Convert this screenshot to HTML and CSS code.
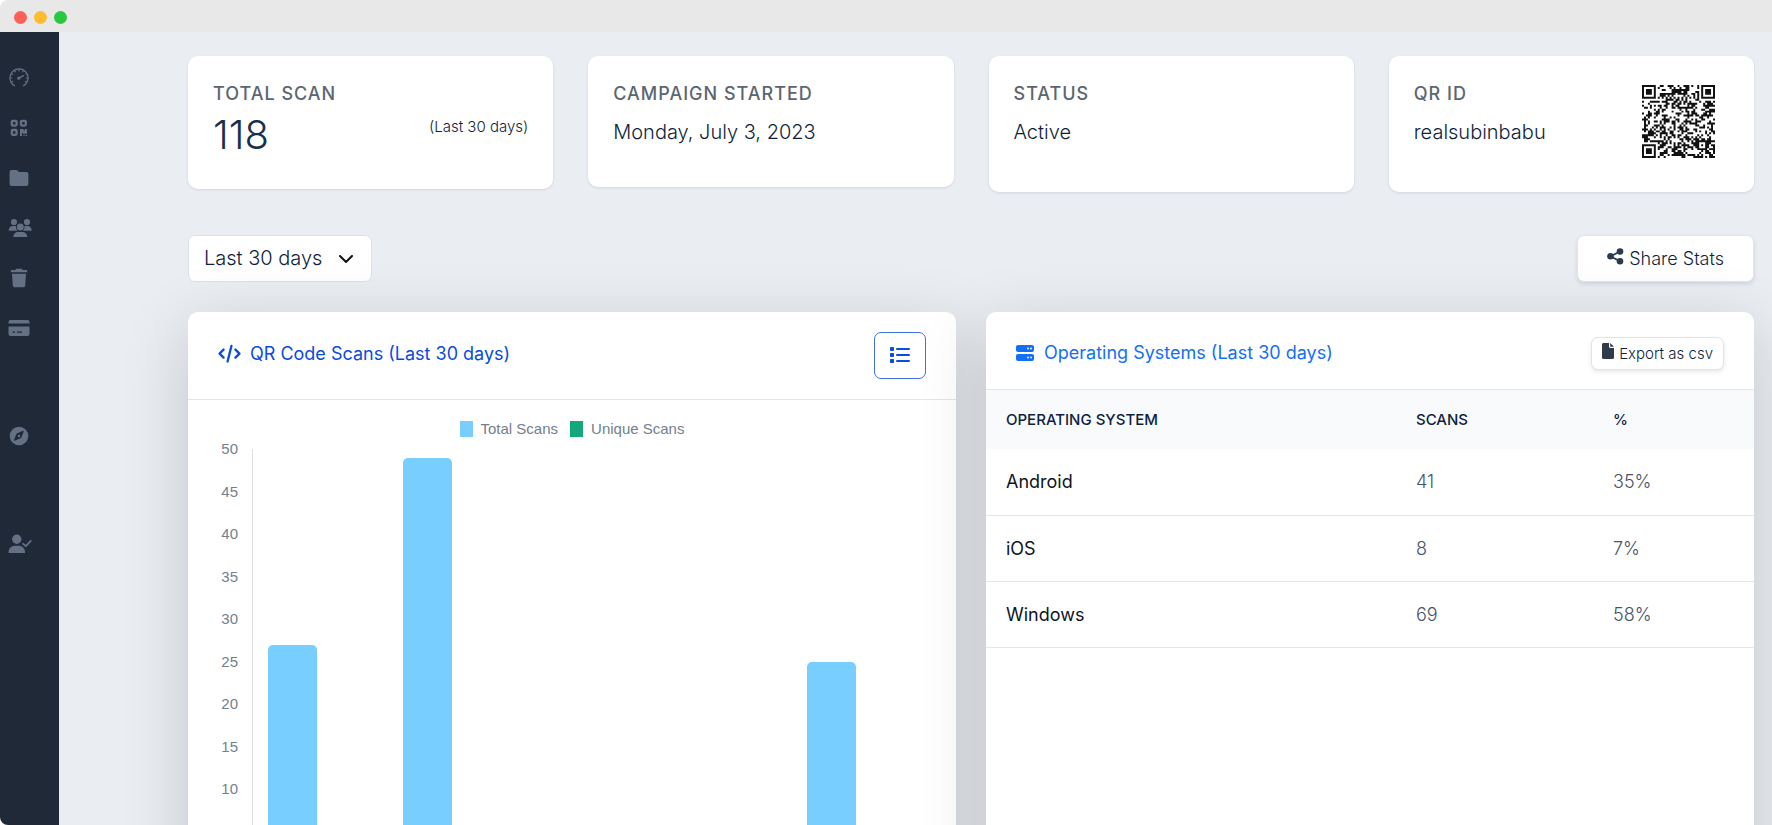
FILE: index.html
```
<!DOCTYPE html>
<html lang="en">
<head>
  <meta charset="utf-8">
  <title>QR Stats</title>
  <link rel="stylesheet" href="styles.css">
</head>
<body>
<div class="window">
  <!-- title bar -->
  <div class="title-bar">
    <span class="dot red"></span>
    <span class="dot yellow"></span>
    <span class="dot green"></span>
  </div>

  <div class="app">
    <!-- sidebar -->
    <nav class="sidebar">
      <a href="#" aria-label="Dashboard">
        <svg width="20" height="20" viewBox="0 0 20 20" fill="none" stroke="currentColor" stroke-width="1.2" stroke-linecap="round">
          <path d="M5.6 17.8A9 9 0 1 1 14.4 17.8"/>
          <path d="M10 1.4v1.6M5.6 2.6l.7 1.2M14.4 2.6l-.7 1.2M2.4 5.8l1.3.7M1.3 10h1.5M2.4 14.2l1.3-.7M17.6 14.2l-1.3-.7M18.7 10h-1.5M17.6 5.8l-.6.4"/>
          <path d="M10.4 9.8l4-2.1" stroke-width="1.5"/>
          <circle cx="9.8" cy="10.2" r="1" fill="currentColor"/>
        </svg>
      </a>
      <a href="#" aria-label="QR codes">
        <svg width="20" height="20" viewBox="0 0 20 20" fill="none" stroke="currentColor" stroke-width="2.3">
          <rect x="2.8" y="2.8" width="4.8" height="4.8" rx="1"/>
          <rect x="12" y="2.8" width="4.8" height="4.8" rx="1"/>
          <rect x="2.8" y="12" width="4.8" height="4.8" rx="1"/>
          <path fill="currentColor" stroke="none" d="M11 11h3l1.800 2V11H18v4.800h-3.600L13 14.500V18h-2zM14.400 16.700h1.300V18h-1.300zM16.700 16.700H18V18h-1.300z"/>
        </svg>
      </a>
      <a href="#" aria-label="Folders">
        <svg width="20" height="20" viewBox="0 0 20 20" fill="currentColor"><path d="M.6 4a2 2 0 0 1 2-2h4.5c.6 0 1.2.2 1.6.7l.8.8c.4.4.8.6 1.4.6h6.5a2 2 0 0 1 2 2V16a2 2 0 0 1-2 2H2.600a2 2 0 0 1-2-2z"/></svg>
      </a>
      <a href="#" aria-label="Team">
        <svg width="24" height="20" viewBox="0 0 24 20" fill="currentColor">
          <circle cx="6" cy="4" r="3.100"/><circle cx="19" cy="4" r="3.100"/><circle cx="12.300" cy="9" r="3.500"/>
          <path d="M.7 12.700C.7 10 2.500 8 5 8h2.200c.3 0 .6 0 .9.100-.3 2 .300 3.500 1.400 4.600zM23.700 12.700c0-2.700-1.800-4.700-4.300-4.700h-2.100c-.3 0-.6 0-.9.100.3 2-.300 3.500-1.400 4.600zM5.300 19c0-3 2.200-5 4.900-5h4.200c2.700 0 4.900 2 4.900 5z"/>
        </svg>
      </a>
      <a href="#" aria-label="Trash">
        <svg width="20" height="20" viewBox="0 0 20 20" fill="currentColor"><path d="M7.200.800h5.600l.8 1.200h3.600c.6 0 1 .4 1 1v1.200H1.800V3c0-.6.4-1 1-1h3.600zM3 5.700h14l-.8 12c-.1.900-.8 1.500-1.700 1.500H5.500c-.9 0-1.600-.6-1.700-1.500z"/></svg>
      </a>
      <a href="#" aria-label="Billing">
        <svg width="22" height="20" viewBox="0 0 22 20" fill="currentColor"><path fill-rule="evenodd" d="M2.500 2h17a2 2 0 0 1 2 2v1.600H.5V4a2 2 0 0 1 2-2zM.5 8.500h21V16a2 2 0 0 1-2 2h-17a2 2 0 0 1-2-2zM4.500 13.400v1.300H7v-1.300zM9 13.400v1.300h5v-1.300z"/></svg>
      </a>
      <a href="#" class="spaced" aria-label="Explore">
        <svg width="20" height="20" viewBox="0 0 20 20" fill="currentColor"><path fill-rule="evenodd" d="M10 .700a9.300 9.300 0 1 1 0 18.600A9.300 9.300 0 0 1 10 .700zM14.800 5.300c.1-.4-.2-.7-.6-.6L8.300 7.200c-.5.200-.8.500-1 1l-2.300 5.900c-.1.400.200.700.600.600l5.900-2.500c.5-.2.800-.5 1-1zM10 8.700a1.300 1.300 0 1 1 0 2.600 1.300 1.300 0 0 1 0-2.600z"/></svg>
      </a>
      <a href="#" class="spaced" aria-label="Account">
        <svg width="24" height="20" viewBox="0 0 24 20" fill="currentColor">
          <circle cx="8.800" cy="5.300" r="4.700"/>
          <path d="M.6 19v-1c0-3.600 2.900-6.300 6.500-6.300h3.400c3.600 0 6.500 2.700 6.500 6.300v1z"/>
          <path d="M15.200 9.800l2.600 2.400 5-5.400" fill="none" stroke="currentColor" stroke-width="1.800" stroke-linecap="round" stroke-linejoin="round"/>
        </svg>
      </a>
    </nav>

    <main class="content">
      <!-- summary cards -->
      <div class="cards">
        <div class="card card-total">
          <h2>Total Scan</h2>
          <div class="card-row">
            <span class="total">118</span>
            <span class="period">(Last 30 days)</span>
          </div>
        </div>
        <div class="card card-campaign">
          <h2>Campaign Started</h2>
          <p>Monday, July 3, 2023</p>
        </div>
        <div class="card">
          <h2>Status</h2>
          <p>Active</p>
        </div>
        <div class="card card-qr">
          <div>
            <h2>QR ID</h2>
            <p>realsubinbabu</p>
          </div>
          <svg id="qr" class="qr" viewBox="0 0 37 37" role="img" aria-label="QR code"></svg>
        </div>
      </div>

      <!-- toolbar -->
      <div class="toolbar">
        <select class="range" aria-label="Date range">
          <option>Last 30 days</option>
        </select>
        <button type="button" class="share">
          <svg width="17" height="17" viewBox="0 0 17 17" fill="currentColor"><circle cx="13" cy="3.500" r="3.300"/><circle cx="3.500" cy="8.300" r="3.300"/><circle cx="13" cy="13.200" r="3.300"/><path d="M13 3.500L3.500 8.300l9.500 4.900" fill="none" stroke="currentColor" stroke-width="1.800"/></svg>
          Share Stats
        </button>
      </div>

      <div class="panels">
        <!-- scans chart -->
        <section class="panel">
          <div class="panel-head head-scans">
            <h3>
              <svg width="23" height="20" viewBox="0 0 24 20" fill="none" stroke="currentColor" stroke-width="2.400" stroke-linecap="round" stroke-linejoin="round"><path d="M5.800 5.400L1.600 9.600l4.200 4.200M18.200 5.400l4.200 4.200-4.200 4.200M14 1.600L10 17.800"/></svg>
              QR Code Scans (Last 30 days)
            </h3>
            <button type="button" class="list-btn" aria-label="Show list">
              <svg width="20" height="18" viewBox="0 0 20 18" fill="currentColor"><rect x="0" y="0" width="4" height="4" rx=".8"/><rect x="0" y="6" width="4" height="4" rx=".8"/><rect x="0" y="12" width="4" height="4" rx=".8"/><rect x="6" y="1" width="14" height="2" rx="1"/><rect x="6" y="7" width="14" height="2" rx="1"/><rect x="6" y="13" width="14" height="2" rx="1"/></svg>
            </button>
          </div>
          <div class="chart">
            <div class="legend">
              <span><i class="swatch blue"></i>Total Scans</span>
              <span><i class="swatch teal"></i>Unique Scans</span>
            </div>
            <div class="chart-body">
              <div class="y-axis">
                <span>50</span><span>45</span><span>40</span><span>35</span><span>30</span><span>25</span><span>20</span><span>15</span><span>10</span>
              </div>
              <div class="plot">
                <div class="day"><div class="bar" style="height: 54%"></div></div>
                <div class="day"><div class="bar" style="height: 98%"></div></div>
                <div class="day"></div>
                <div class="day"></div>
                <div class="day"><div class="bar" style="height: 50%"></div></div>
              </div>
            </div>
          </div>
        </section>

        <!-- operating systems -->
        <section class="panel">
          <div class="panel-head head-os">
            <h3>
              <svg width="18" height="16" viewBox="0 0 18 16"><rect width="18" height="7" rx="2" fill="currentColor"/><rect y="9" width="18" height="7" rx="2" fill="currentColor"/><g fill="#fff"><circle cx="12" cy="3.500" r=".9"/><circle cx="15" cy="3.500" r=".9"/><circle cx="12" cy="12.500" r=".9"/><circle cx="15" cy="12.500" r=".9"/></g></svg>
              Operating Systems (Last 30 days)
            </h3>
            <button type="button" class="export">
              <svg width="12" height="16" viewBox="0 0 12 16" fill="currentColor"><path d="M1.500 0H7v3.500C7 4.400 7.600 5 8.500 5H12v9.500c0 .8-.7 1.500-1.500 1.500h-9C.7 16 0 15.300 0 14.500v-13C0 .7.700 0 1.500 0zM8.200 0L12 3.800H8.200z"/></svg>
              Export as csv
            </button>
          </div>
          <table class="os-table">
            <thead>
              <tr><th class="col-os">Operating System</th><th class="col-scans">Scans</th><th>%</th></tr>
            </thead>
            <tbody>
              <tr><td>Android</td><td>41</td><td>35%</td></tr>
              <tr><td>iOS</td><td>8</td><td>7%</td></tr>
              <tr><td>Windows</td><td>69</td><td>58%</td></tr>
            </tbody>
          </table>
        </section>
      </div>
    </main>
  </div>
</div>
<script src="qr.js"></script>
</body>
</html>
```
FILE: styles.css
```
* { box-sizing: border-box; }
body { margin: 0; background: #fff; color: #0f1f3d; font-family: Inter, "Liberation Sans", sans-serif; }
h2, h3, p { margin: 0; }
svg { flex-shrink: 0; }
button, select { font-family: inherit; cursor: pointer; }

/* window */
.window { display: flex; flex-direction: column; height: 100vh; overflow: hidden; border-radius: 8px 0 0 8px; }
.title-bar { display: flex; align-items: center; gap: 7px; height: 32px; flex-shrink: 0; padding: 2px 14px 0; background: #e8e8e8; }
.dot { width: 13px; height: 13px; border-radius: 50%; }
.red { background: #ff5f57; }
.yellow { background: #febc2e; }
.green { background: #28c840; }
.app { display: flex; flex: 1; min-height: 0; }

/* sidebar */
.sidebar { display: flex; flex-direction: column; flex-shrink: 0; width: 59px; padding-top: 21px; background: #1f2937; }
.sidebar a { display: flex; align-items: center; height: 50px; padding-left: 8px; color: #647084; }
.sidebar a svg[width="20"] { margin-left: 1px; }
.sidebar .spaced { margin-top: 58px; }

/* content */
.content { flex: 1; min-width: 0; padding: 24px 18px 0 129px; background: #eaedf2; }
.cards { display: grid; grid-template-columns: repeat(4, 1fr); gap: 35px; align-items: start; }
.card { min-height: 136px; padding: 25px; background: #fff; border-radius: 10px; box-shadow: 0 1px 3px rgba(15, 31, 61, .1); }
.card-total { min-height: 133px; padding-bottom: 0; }
.card-campaign { min-height: 131px; }
.card h2 { color: #5b6670; font-size: 18px; font-weight: 500; line-height: 26px; letter-spacing: 1px; text-transform: uppercase; }
.card p { margin-top: 10px; font-size: 20px; font-weight: 300; line-height: 30px; }
.card-row { display: flex; justify-content: space-between; align-items: flex-start; }
.total { margin-top: 4px; color: #17304d; font-size: 40px; font-weight: 300; line-height: 48px; }
.period { margin-top: 8px; font-size: 15px; line-height: 24px; font-weight: 300; }
.card-qr { display: flex; justify-content: space-between; align-items: flex-start; }
.qr { width: 73px; height: 73px; margin: 4px 14px 0 0; }

/* toolbar */
.toolbar { display: flex; justify-content: space-between; align-items: center; margin: 43px 0 30px; }
.range { appearance: none; width: 184px; height: 47px; padding: 0 15px 1px; border: 1px solid #dbe0e8; border-radius: 7px; color: #0f1f3d; font-size: 20px; font-weight: 300;
  background: #fff url("data:image/svg+xml,%3Csvg xmlns='http://www.w3.org/2000/svg' width='14' height='8' fill='none' stroke='%23111' stroke-width='2' stroke-linecap='round' stroke-linejoin='round'%3E%3Cpath d='M1 1l6 6 6-6'/%3E%3C/svg%3E") no-repeat right 18px center; }
.share { display: flex; align-items: center; gap: 5px; height: 47px; padding: 0 29px; background: #fff; border: 1px solid #e2e5ec; border-radius: 7px; box-shadow: 0 2px 4px rgba(15, 31, 61, .12); color: #0f1f3d; font-size: 18px; font-weight: 300; }
.share svg { color: #2c3a4d; margin-bottom: 4px; }

/* panels */
.panels { display: grid; grid-template-columns: 1fr 1fr; gap: 30px; }
.panel { min-height: 600px; background: #fff; border-radius: 10px; box-shadow: 0 16px 66px rgba(0, 0, 0, .17); }
.panel-head { display: flex; justify-content: space-between; align-items: center; padding: 0 30px; border-bottom: 1px solid #e2e5e9; }
.panel-head h3 { display: flex; align-items: center; gap: 9px; font-size: 18px; font-weight: 400; line-height: 24px; }
.head-scans { height: 88px; }
.head-scans h3 { color: #0a4be0; margin-bottom: 4px; }
.head-os { height: 78px; padding-top: 5px; }
.head-os h3 { color: #1370f5; gap: 10px; }
.list-btn { display: flex; align-items: center; justify-content: center; width: 52px; height: 47px; background: #fff; border: 1px solid #3f6fe0; border-radius: 7px; color: #0a4be0; }
.export { display: flex; align-items: center; gap: 5px; height: 33px; padding: 0 10px; background: #fff; border: 1px solid #dfe3ea; border-radius: 7px; box-shadow: 0 2px 4px rgba(15, 31, 61, .1); color: #0f1f3d; font-size: 15px; font-weight: 300; }
.export svg { color: #2f3b4c; margin-bottom: 4px; }

/* chart */
.chart { padding: 19px 29px 0 20px; color: #73808d; font: 15px/20px "Liberation Sans", Arial, sans-serif; }
.legend { display: flex; justify-content: center; gap: 12px; margin-left: 9px; }
.legend span { display: flex; align-items: center; gap: 8px; }
.swatch { width: 13px; height: 16px; }
.blue { background: #78ceff; }
.teal { background: #12a87b; }
.chart-body { display: flex; align-items: flex-start; }
.y-axis { display: flex; flex-direction: column; justify-content: space-between; width: 30px; height: 360px; text-align: right; }
.plot { display: grid; grid-template-columns: repeat(5, 1fr); flex: 1; height: 425px; margin: 10px 0 0 14px; border-left: 1px solid #dde0e3; }
.day { display: flex; align-items: flex-end; padding-left: 15px; }
.bar { width: 49px; background: #78ceff; border-radius: 5px 5px 0 0; }

/* table */
.os-table { width: 100%; table-layout: fixed; border-collapse: collapse; }
.os-table th, .os-table td { padding: 0 20px; text-align: left; }
.os-table th { height: 59px; background: #f8fafc; color: #0f1f3d; font-size: 15px; font-weight: 500; text-transform: uppercase; }
.os-table td { height: 66px; border-bottom: 1px solid #e2e5e9; color: #475268; font-size: 18px; font-weight: 300; }
.os-table td:first-child { color: #0d1524; font-weight: 400; }
.col-os { width: 410px; }
.col-scans { width: 197px; }
```
FILE: qr.js
```
// draws the QR code for the campaign card
var SIZE = 37;
var seed = 2023;

function nextBit() {
  seed = (seed * 1103515245 + 12345) % 2147483648;
  return (seed >> 16) & 1;
}

// concentric square, used for the corners and the alignment mark
function ring(x, y, cx, cy, r) {
  var d = Math.max(Math.abs(x - cx), Math.abs(y - cy));
  if (d > r + 1) return null;
  if (r === 3) return d === 3 || d < 2;
  return d > r ? null : d === 2 || d === 0;
}

function isDark(x, y) {
  var bit = nextBit();
  var marks = [ring(x, y, 3, 3, 3), ring(x, y, 33, 3, 3), ring(x, y, 3, 33, 3), ring(x, y, 30, 30, 2)];
  for (var i = 0; i < marks.length; i++) {
    if (marks[i] !== null) return marks[i];
  }
  if (x === 6 || y === 6) return (x + y) % 2 === 0;
  return bit === 1;
}

var d = '';
for (var y = 0; y < SIZE; y++) {
  for (var x = 0; x < SIZE; x++) {
    if (isDark(x, y)) d += 'M' + x + ' ' + y + 'h1v1h-1z';
  }
}
var path = document.createElementNS('http://www.w3.org/2000/svg', 'path');
path.setAttribute('d', d);
path.setAttribute('fill', '#111');
document.getElementById('qr').appendChild(path);
```
